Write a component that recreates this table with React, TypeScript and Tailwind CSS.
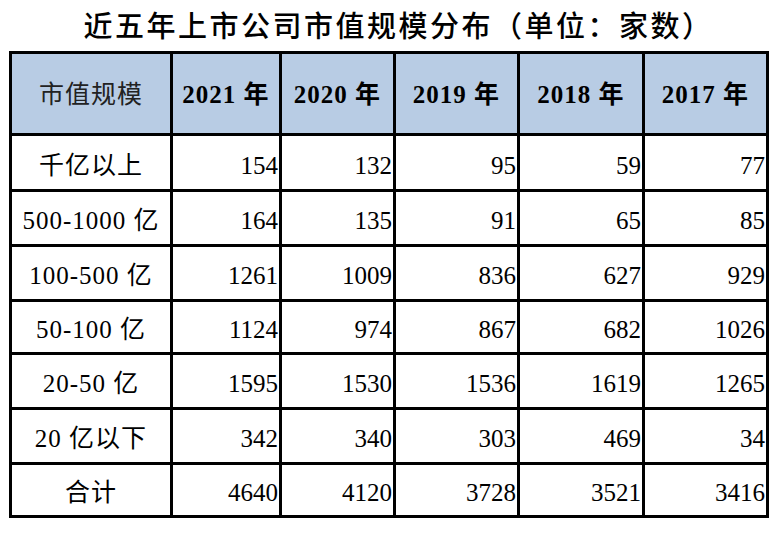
const years = ['2021 年', '2020 年', '2019 年', '2018 年', '2017 年'];

const rows = [
  { label: '千亿以上', values: [154, 132, 95, 59, 77], h: 'h-[56px]' },
  { label: '500-1000 亿', values: [164, 135, 91, 65, 85], h: 'h-[55px]' },
  { label: '100-500 亿', values: [1261, 1009, 836, 627, 929], h: 'h-[55px]' },
  { label: '50-100 亿', values: [1124, 974, 867, 682, 1026], h: 'h-[53px]' },
  { label: '20-50 亿', values: [1595, 1530, 1536, 1619, 1265], h: 'h-[55px]' },
  { label: '20 亿以下', values: [342, 340, 303, 469, 34], h: 'h-[55px]' },
  { label: '合计', values: [4640, 4120, 3728, 3521, 3416], h: 'h-[53px]' },
];

const font = "font-['Liberation_Serif','Noto_Sans_CJK_SC',serif]";

export default function App() {
  return (
    <div className={`w-[779px] h-[550px] bg-white text-black ${font}`}>
      <h1 className="h-[51px] flex items-center justify-center pl-[18px] pb-[2px] text-[29px] leading-none font-medium tracking-[2.5px] font-['Noto_Sans_CJK_SC',sans-serif]">
        近五年上市公司市值规模分布（单位：家数）
      </h1>
      <table className="ml-[9px] w-[760px] border-collapse border-[3px] border-black table-fixed">
        <colgroup>
          <col className="w-[161px]" />
          <col className="w-[109px]" />
          <col className="w-[114px]" />
          <col className="w-[124px]" />
          <col className="w-[125px]" />
          <col className="w-[124px]" />
        </colgroup>
        <thead>
          <tr className="h-[82px] bg-[#b8cce4]">
            <th className="border-[3px] border-black p-0 pt-[3px] text-[25px] font-normal tracking-[1px] text-[#222]">市值规模</th>
            {years.map((y) => (
              <th key={y} className="border-[3px] border-black p-0 pt-[3px] text-[25px] font-bold tracking-[1px]">
                {y}
              </th>
            ))}
          </tr>
        </thead>
        <tbody>
          {rows.map((r) => (
            <tr key={r.label} className={r.h}>
              <td className="border-[3px] border-black p-0 pt-[6px] text-center text-[25px] tracking-[1px] whitespace-nowrap">{r.label}</td>
              {r.values.map((v, i) => (
                <td key={i} className="border-[3px] border-black p-0 pt-[6px] pr-[1px] text-right text-[25px]">
                  {v}
                </td>
              ))}
            </tr>
          ))}
        </tbody>
      </table>
    </div>
  );
}
